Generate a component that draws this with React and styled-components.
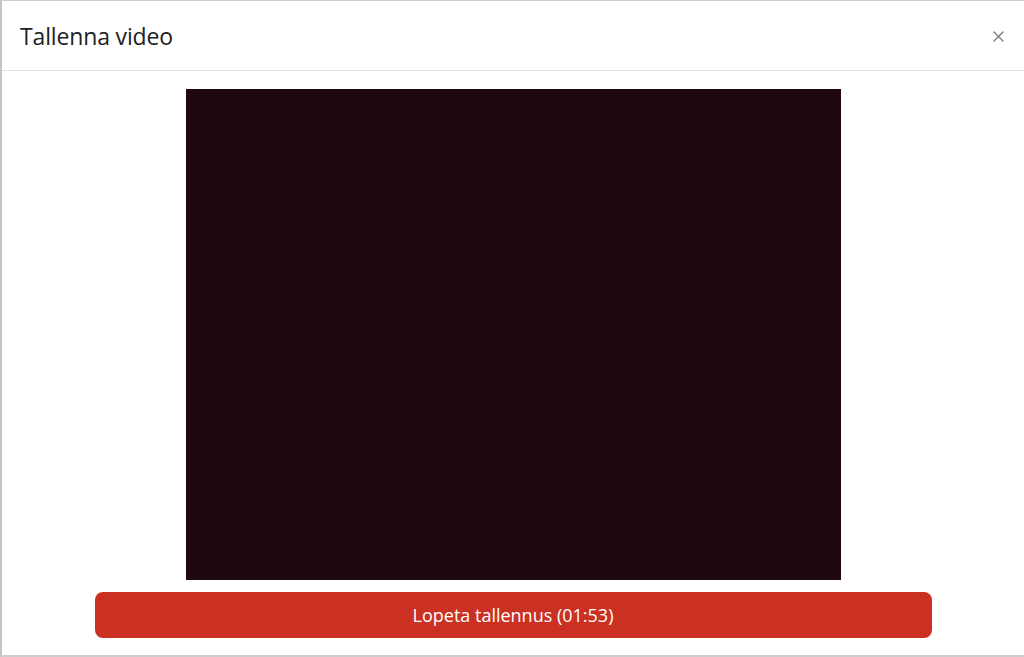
import React from "react";
import styled, { createGlobalStyle } from "styled-components";

const Global = createGlobalStyle`
  html, body { margin: 0; padding: 0; background: #ffffff; }
  body { font-family: "Open Sans", "Noto Sans", sans-serif; }
  * { box-sizing: border-box; }
`;

const Modal = styled.div`
  width: 1024px;
  height: 657px;
  border-top: 1px solid #cfcfcf;
  border-left: 2px solid #c4c4c4;
  border-bottom: 2px solid #cdcdcd;
  background: #fff;
  display: flex;
  flex-direction: column;
`;

const Header = styled.div`
  height: 70px;
  flex: none;
  display: flex;
  align-items: center;
  justify-content: space-between;
  padding: 0 16px 0 18px;
  border-bottom: 1px solid #e3e3e3;
`;

const Title = styled.h5`
  margin: 0;
  font-family: "Open Sans", sans-serif;
  font-weight: 400;
  font-size: 23px;
  color: #1d2125;
  letter-spacing: -0.15px;
`;

const Close = styled.button`
  border: none;
  background: transparent;
  padding: 4px;
  display: flex;
  align-items: center;
  justify-content: center;
  cursor: pointer;
  margin-top: 2px;
`;

const Body = styled.div`
  flex: 1;
  display: flex;
  flex-direction: column;
  align-items: center;
  padding-top: 18px;
  gap: 12px;
`;

const Video = styled.div`
  width: 655px;
  height: 491px;
  background: #20080f;
`;

const StopButton = styled.button`
  width: 837px;
  height: 46px;
  border: none;
  border-radius: 8px;
  background: #ca3122;
  color: #fff;
  font-family: "Open Sans", sans-serif;
  font-size: 18px;
  cursor: pointer;
`;

export default function App() {
  return (
    <>
      <Global />
      <Modal>
        <Header>
          <Title>Tallenna video</Title>
          <Close aria-label="Sulje">
            <svg width="11" height="11" viewBox="0 0 11 11">
              <path d="M1 1 L10 10 M10 1 L1 10" stroke="#7c7c7c" strokeWidth="1.4" strokeLinecap="round" />
            </svg>
          </Close>
        </Header>
        <Body>
          <Video />
          <StopButton>Lopeta tallennus (01:53)</StopButton>
        </Body>
      </Modal>
    </>
  );
}
